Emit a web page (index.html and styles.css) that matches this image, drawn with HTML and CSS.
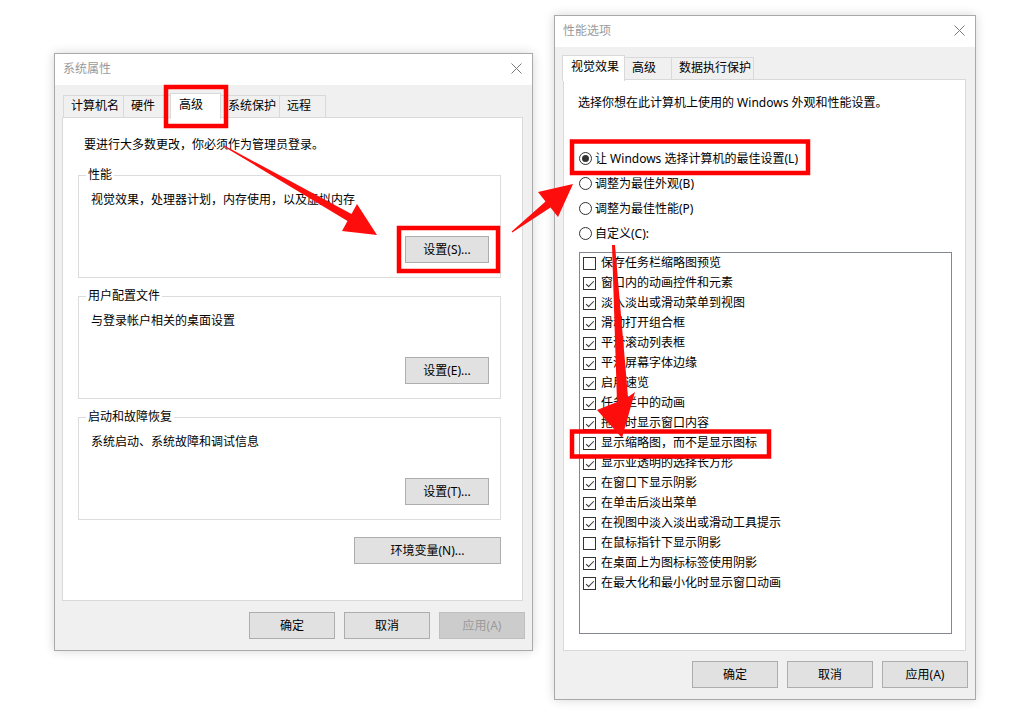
FILE: index.html
```html
<!DOCTYPE html>
<html lang="zh-CN">
<head>
<meta charset="utf-8">
<title>系统属性 / 性能选项</title>
<link rel="stylesheet" href="styles.css">
</head>
<body>
<div class="dialog sys">
  <div class="titlebar">
    <span class="title">系统属性</span>
    <svg class="close" width="11" height="11" viewBox="0 0 11 11"><path d="M0.5 0.5L10.5 10.5M10.5 0.5L0.5 10.5" stroke="#7a7a7a" stroke-width="1" fill="none"/></svg>
  </div>
  <div class="body">
    <div class="tabs">
      <div class="tab w60">计算机名</div>
      <div class="tab w47">硬件</div>
      <div class="tab sel w51">高级</div>
      <div class="tab w58">系统保护</div>
      <div class="tab w47">远程</div>
    </div>
    <div class="panel sys-panel">
      <div class="note">要进行大多数更改，你必须作为管理员登录。</div>
      <div class="group first">
        <span class="legend">性能</span>
        <div class="gtext">视觉效果，处理器计划，内存使用，以及虚拟内存</div>
        <div class="btn gbtn">设置(S)...</div>
      </div>
      <div class="group">
        <span class="legend">用户配置文件</span>
        <div class="gtext">与登录帐户相关的桌面设置</div>
        <div class="btn gbtn">设置(E)...</div>
      </div>
      <div class="group">
        <span class="legend">启动和故障恢复</span>
        <div class="gtext">系统启动、系统故障和调试信息</div>
        <div class="btn gbtn">设置(T)...</div>
      </div>
      <div class="envrow"><div class="btn envbtn">环境变量(N)...</div></div>
    </div>
    <div class="actions">
      <div class="btn dbtn">确定</div>
      <div class="btn dbtn">取消</div>
      <div class="btn dbtn dis">应用(A)</div>
    </div>
  </div>
</div>

<div class="dialog perf">
  <div class="titlebar">
    <span class="title">性能选项</span>
    <svg class="close" width="11" height="11" viewBox="0 0 11 11"><path d="M0.5 0.5L10.5 10.5M10.5 0.5L0.5 10.5" stroke="#7a7a7a" stroke-width="1" fill="none"/></svg>
  </div>
  <div class="body">
    <div class="tabs perf-tabs">
      <div class="tab sel w63">视觉效果</div>
      <div class="tab w46">高级</div>
      <div class="tab w83">数据执行保护</div>
    </div>
    <div class="panel perf-panel">
      <div class="intro">选择你想在此计算机上使用的 Windows 外观和性能设置。</div>
      <div class="radios">
        <div class="rrow"><span class="rd on"></span><span>让 Windows 选择计算机的最佳设置(L)</span></div>
        <div class="rrow"><span class="rd"></span><span>调整为最佳外观(B)</span></div>
        <div class="rrow"><span class="rd"></span><span>调整为最佳性能(P)</span></div>
        <div class="rrow"><span class="rd"></span><span>自定义(C):</span></div>
      </div>
      <div class="list">
        <div class="item"><span class="cb"></span>保存任务栏缩略图预览</div>
        <div class="item"><span class="cb on"></span>窗口内的动画控件和元素</div>
        <div class="item"><span class="cb on"></span>淡入淡出或滑动菜单到视图</div>
        <div class="item"><span class="cb on"></span>滑动打开组合框</div>
        <div class="item"><span class="cb on"></span>平滑滚动列表框</div>
        <div class="item"><span class="cb on"></span>平滑屏幕字体边缘</div>
        <div class="item"><span class="cb on"></span>启用速览</div>
        <div class="item"><span class="cb on"></span>任务栏中的动画</div>
        <div class="item"><span class="cb on"></span>拖动时显示窗口内容</div>
        <div class="item"><span class="cb on"></span>显示缩略图，而不是显示图标</div>
        <div class="item"><span class="cb on"></span>显示亚透明的选择长方形</div>
        <div class="item"><span class="cb on"></span>在窗口下显示阴影</div>
        <div class="item"><span class="cb on"></span>在单击后淡出菜单</div>
        <div class="item"><span class="cb on"></span>在视图中淡入淡出或滑动工具提示</div>
        <div class="item"><span class="cb"></span>在鼠标指针下显示阴影</div>
        <div class="item"><span class="cb on"></span>在桌面上为图标标签使用阴影</div>
        <div class="item"><span class="cb on"></span>在最大化和最小化时显示窗口动画</div>
      </div>
    </div>
    <div class="actions">
      <div class="btn dbtn">确定</div>
      <div class="btn dbtn">取消</div>
      <div class="btn dbtn">应用(A)</div>
    </div>
  </div>
</div>

<svg class="overlay" width="1035" height="720" viewBox="0 0 1035 720">
  <g fill="none" stroke="#fe0000" stroke-width="4.5">
    <rect x="166" y="87" width="60" height="39"/>
    <rect x="399" y="228" width="99" height="43"/>
    <rect x="572" y="141.5" width="236" height="31.5"/>
    <rect x="572" y="431.5" width="197" height="25"/>
  </g>
  <g fill="#fe0d0d">
    <polygon points="223.7,146.4 347.5,221 342,231 377,235 357,204 351.5,214 224.3,145.6"/>
    <polygon points="511.7,231.6 545.5,201.4 538,192 573,184 558,217 550.5,207.6 512.3,232.4"/>
    <polygon points="612,245 615,245 628,397 635,392 622,438 597,410 617,402"/>
  </g>
</svg>
</body>
</html>
```

FILE: styles.css
```css
html, body {
  margin: 0;
  padding: 0;
}
body {
  width: 1035px;
  height: 720px;
  position: relative;
  overflow: hidden;
  background: #ffffff;
  font-family: "Noto Sans", "Noto Sans CJK SC", sans-serif;
  font-size: 12px;
  color: #000;
}

.dialog {
  position: absolute;
  box-sizing: border-box;
  border: 1px solid #a9a9a9;
  background: #f0f0f0;
  box-shadow: 0 0 10px rgba(0, 0, 0, 0.16);
  display: flex;
  flex-direction: column;
}
.sys {
  left: 54px;
  top: 53px;
  width: 479px;
  height: 598px;
}
.perf {
  left: 554px;
  top: 15px;
  width: 422px;
  height: 685px;
}

.titlebar {
  height: 31px;
  flex: none;
  background: #fff;
  display: flex;
  align-items: center;
  justify-content: space-between;
  padding: 0 10px 0 8px;
}
.title {
  color: #9a9a9a;
  line-height: 16px;
  margin-top: -2px;
}
.close {
  display: block;
  margin-top: -2px;
}

.body {
  flex: 1;
  display: flex;
  flex-direction: column;
  padding: 8px 9px 11px 7px;
  min-height: 0;
}
.perf .body {
  padding: 8px 9px 11px 8px;
}

.tabs {
  display: flex;
  align-items: flex-end;
  height: 24px;
  padding-left: 1px;
  position: relative;
  z-index: 2;
  flex: none;
}
.perf-tabs {
  padding-left: 0;
}
.tab {
  box-sizing: border-box;
  height: 22px;
  border: 1px solid #d9d9d9;
  border-bottom: none;
  border-right: none;
  background: #f0f0f0;
  padding-left: 7px;
  line-height: 20px;
  white-space: nowrap;
}
.tab:last-child {
  border-right: 1px solid #d9d9d9;
}
.tab.sel {
  height: 26px;
  background: #fff;
  margin-bottom: -2px;
  border-right: 1px solid #d9d9d9;
  line-height: 22px;
  padding-left: 8px;
}
.tab.sel + .tab {
  border-left: none;
}
.perf-tabs .tab.sel {
  margin-left: -1px;
}
.w60 { width: 60px; }
.w47 { width: 47px; }
.w51 { width: 51px; }
.w58 { width: 58px; }
.w63 { width: 63px; }
.w46 { width: 46px; }
.w83 { width: 83px; }

.panel {
  flex: 1;
  background: #fff;
  border: 1px solid #d9d9d9;
  position: relative;
  z-index: 1;
  min-height: 0;
}

.btn {
  box-sizing: border-box;
  height: 27px;
  border: 1px solid #adadad;
  background: #e1e1e1;
  display: flex;
  align-items: center;
  justify-content: center;
  line-height: 16px;
  white-space: nowrap;
}
.btn.dis {
  background: #cccccc;
  border-color: #bfbfbf;
  color: #9a9a9a;
}
.dbtn {
  width: 86px;
}
.actions {
  display: flex;
  justify-content: flex-end;
  gap: 9px;
  margin-top: 11px;
  margin-right: -2px;
  flex: none;
}
.perf .actions {
  margin-top: 10px;
}

/* System properties panel */
.sys-panel {
  padding: 19px 0 0 15px;
}
.note {
  line-height: 16px;
  padding-left: 6px;
}
.group {
  width: 423px;
  height: 103px;
  box-sizing: border-box;
  border: 1px solid #dcdcdc;
  margin-top: 18px;
  display: flex;
  flex-direction: column;
  padding: 0 11px 14px 12px;
}
.group.first {
  margin-top: 22px;
}
.legend {
  align-self: flex-start;
  margin: -9px 0 0 -5px;
  padding: 0 2px;
  background: #fff;
  line-height: 16px;
}
.gtext {
  margin-top: 9px;
  line-height: 16px;
}
.gbtn {
  margin-top: auto;
  align-self: flex-end;
  width: 84px;
}
.envrow {
  width: 423px;
  display: flex;
  justify-content: flex-end;
  margin-top: 17px;
}
.envbtn {
  width: 147px;
}

/* Performance options panel */
.perf-panel {
  padding: 15px 0 0 14px;
}
.intro {
  line-height: 16px;
}
.radios {
  margin-top: 35px;
}
.rrow {
  display: flex;
  align-items: center;
  height: 25px;
  gap: 3px;
  padding-left: 1px;
  line-height: 16px;
}
.rd {
  width: 13px;
  height: 13px;
  box-sizing: border-box;
  border: 1px solid #333;
  border-radius: 50%;
  background: #fff;
  position: relative;
  flex: none;
}
.rd.on::after {
  content: "";
  position: absolute;
  left: 2px;
  top: 2px;
  width: 7px;
  height: 7px;
  border-radius: 50%;
  background: #333;
}
.list {
  width: 373px;
  height: 382px;
  box-sizing: border-box;
  border: 1px solid #828790;
  margin: 6px 0 0 1px;
  padding-left: 3px;
}
.item {
  height: 20px;
  display: flex;
  align-items: center;
  gap: 5px;
  line-height: 16px;
  white-space: nowrap;
}
.cb {
  width: 13px;
  height: 13px;
  box-sizing: border-box;
  border: 1px solid #333;
  background: #fff;
  position: relative;
  flex: none;
}
.cb.on::after {
  content: "";
  position: absolute;
  left: 4px;
  top: 1px;
  width: 3px;
  height: 7px;
  border: solid #333;
  border-width: 0 1px 1px 0;
  transform: rotate(45deg);
}

.overlay {
  position: absolute;
  left: 0;
  top: 0;
  z-index: 10;
  pointer-events: none;
}
```
